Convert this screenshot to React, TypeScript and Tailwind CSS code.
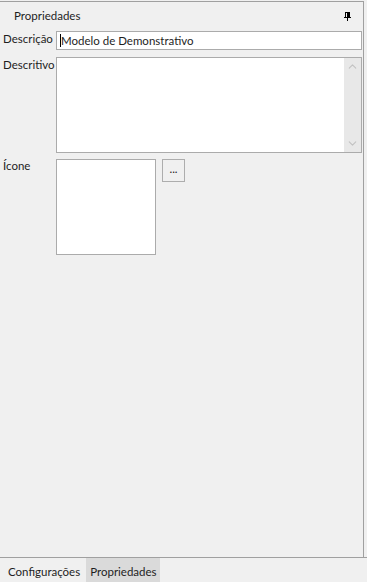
import { ChevronUp, ChevronDown } from 'lucide-react'

function PinIcon() {
  return (
    <svg width="7" height="9" viewBox="0 0 7 9" className="block">
      <rect x="1" y="0" width="5" height="1" fill="#000" />
      <rect x="1" y="1" width="1" height="4" fill="#000" />
      <rect x="3" y="1" width="3" height="4" fill="#000" />
      <rect x="0" y="5" width="7" height="1" fill="#000" />
      <rect x="3" y="6" width="1" height="3" fill="#000" />
    </svg>
  )
}

export default function App() {
  return (
    <div
      className="w-[367px] h-[582px] bg-[#f0f0f0] flex flex-col text-[11.5px] text-[#1e1e1e]"
      style={{ fontFamily: 'Lato, "Segoe UI", sans-serif' }}
    >
      {/* Panel */}
      <div className="mt-[1px] w-[364px] flex-1 border-t border-r border-[#a0a0a0] flex flex-col">
        {/* Header */}
        <div className="h-[28px] flex items-center justify-between pl-[14px] pr-[12px]">
          <span className="leading-none">Propriedades</span>
          <PinIcon />
        </div>

        {/* Descrição */}
        <div className="flex pl-[3px] h-[19px] mt-[1px]">
          <span className="w-[53px] leading-[15px]">Descrição</span>
          <div className="w-[306px] h-[19px] bg-white border border-[#ababab] flex items-center pl-[3px]">
            <span className="w-px h-[13px] bg-black" />
            <span className="leading-none">Modelo de Demonstrativo</span>
          </div>
        </div>

        {/* Descritivo */}
        <div className="flex pl-[3px] mt-[7px]">
          <span className="w-[53px] leading-[15px]">Descritivo</span>
          <div className="w-[306px] h-[96px] bg-white border border-[#ababab] flex justify-end">
            <div className="w-[17px] h-full bg-[#e8e8e8] flex flex-col justify-between items-center py-[2px]">
              <ChevronUp size={13} strokeWidth={2} color="#c2c2c2" />
              <ChevronDown size={13} strokeWidth={2} color="#c2c2c2" />
            </div>
          </div>
        </div>

        {/* Ícone */}
        <div className="flex pl-[3px] mt-[6px]">
          <span className="w-[53px] leading-[13px]">Ícone</span>
          <div className="w-[100px] h-[96px] bg-white border border-[#ababab]" />
          <button className="ml-[6px] w-[23px] h-[23px] border border-[#adadad] bg-[#f0f0f0] text-[#1e1e1e] leading-none pb-[3px] flex items-center justify-center">
            ...
          </button>
        </div>

        <div className="flex-1" />
      </div>

      {/* Tabs */}
      <div className="h-[25px] border-t border-[#a0a0a0] flex items-stretch">
        <div className="pl-[8px] pr-[6px] flex items-center pt-[3px]">Configurações</div>
        <div className="pl-[4px] pr-[3px] bg-[#dadada] flex items-center pt-[3px]">Propriedades</div>
      </div>
    </div>
  )
}
